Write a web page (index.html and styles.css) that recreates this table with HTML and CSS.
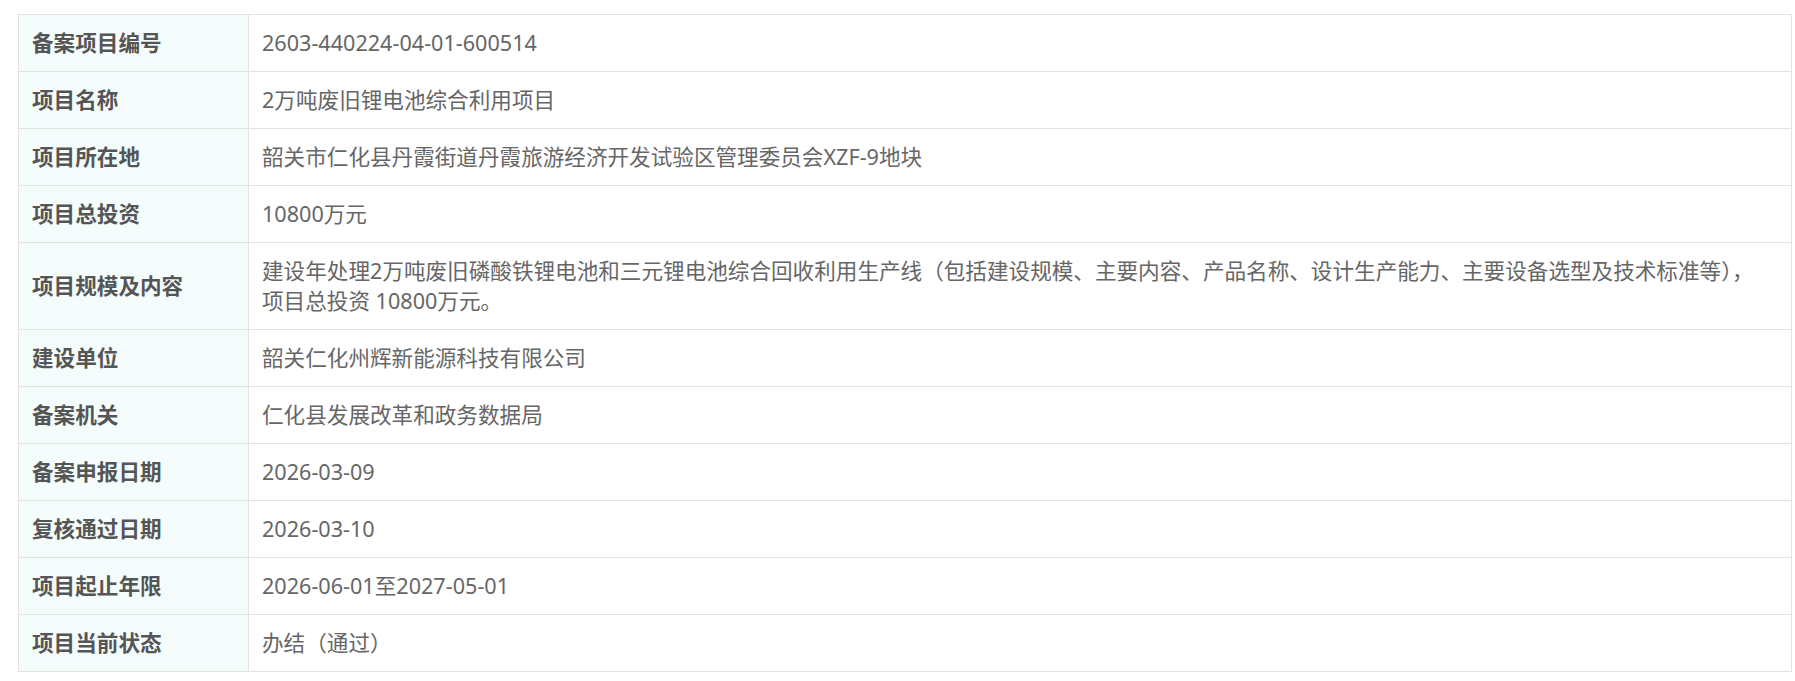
FILE: index.html
```html
<!DOCTYPE html>
<html lang="zh-CN">
<head>
    <meta charset="UTF-8">
    <meta name="viewport" content="width=device-width, initial-scale=1.0">
    <title>项目备案信息</title>
    <link rel="stylesheet" href="styles.css">
</head>
<body>

    <div class="container">
        <!-- 项目备案详情 -->
        <table class="info-table">
            <tr>
                <th>备案项目编号</th>
                <td>2603-440224-04-01-600514</td>
            </tr>
            <tr>
                <th>项目名称</th>
                <td>2万吨废旧锂电池综合利用项目</td>
            </tr>
            <tr>
                <th>项目所在地</th>
                <td>韶关市仁化县丹霞街道丹霞旅游经济开发试验区管理委员会XZF-9地块</td>
            </tr>
            <tr>
                <th>项目总投资</th>
                <td>10800万元</td>
            </tr>
            <tr>
                <th>项目规模及内容</th>
                <td>建设年处理2万吨废旧磷酸铁锂电池和三元锂电池综合回收利用生产线（包括建设规模、主要内容、产品名称、设计生产能力、主要设备选型及技术标准等），<br>项目总投资 10800万元。</td>
            </tr>
            <tr>
                <th>建设单位</th>
                <td>韶关仁化州辉新能源科技有限公司</td>
            </tr>
            <tr>
                <th>备案机关</th>
                <td>仁化县发展改革和政务数据局</td>
            </tr>
            <tr>
                <th>备案申报日期</th>
                <td>2026-03-09</td>
            </tr>
            <tr>
                <th>复核通过日期</th>
                <td>2026-03-10</td>
            </tr>
            <tr>
                <th>项目起止年限</th>
                <td>2026-06-01至2027-05-01</td>
            </tr>
            <tr>
                <th>项目当前状态</th>
                <td>办结（通过）</td>
            </tr>
        </table>
    </div>

</body>
</html>
```

FILE: styles.css
```css
body {
    font-family: "Noto Sans", "Noto Sans CJK SC", sans-serif;
    background-color: #fff;
    margin: 0;
    padding: 14px 3px 0 18px;
}

.info-table {
    width: 100%;
    border-collapse: collapse;
    font-size: 21.6px;
    line-height: 30px;
}

.info-table th,
.info-table td {
    border: 1px solid #e2e2e2;
    padding: 13px 13px;
    text-align: left;
    vertical-align: middle;
}

.info-table th {
    width: 203px;
    background-color: #f4fcfc;
    color: #555;
    font-weight: bold;
}

.info-table td {
    color: #666;
    font-weight: normal;
}
```
